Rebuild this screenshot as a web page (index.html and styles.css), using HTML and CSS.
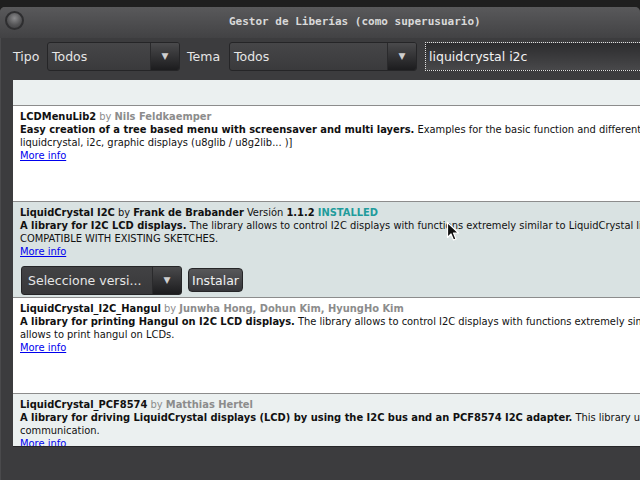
FILE: index.html
```html
<!DOCTYPE html>
<html lang="es">
<head>
<meta charset="utf-8">
<title>Gestor de Liberías</title>
<link rel="stylesheet" href="styles.css">
</head>
<body>
<div class="top-strip"></div>
<div class="window">
  <div class="titlebar">
    <span class="wm-button"></span>
    <span class="title">Gestor de Liberías (como superusuario)</span>
  </div>
  <div class="toolbar">
    <span class="label label-tipo">Tipo</span>
    <div class="combo combo-tipo">
      <span class="combo-text">Todos</span>
      <span class="combo-arrow">▼</span>
    </div>
    <span class="label label-tema">Tema</span>
    <div class="combo combo-tema">
      <span class="combo-text">Todos</span>
      <span class="combo-arrow">▼</span>
    </div>
    <div class="search">liquidcrystal i2c</div>
  </div>
  <div class="list">
    <div class="partial"></div>
    <div class="item">
      <div class="line"><b>LCDMenuLib2</b> <span class="muted">by</span> <b class="muted">Nils Feldkaemper</b></div>
      <div class="line"><b>Easy creation of a tree based menu with screensaver and multi layers.</b> Examples for the basic function and different</div>
      <div class="line">liquidcrystal, i2c, graphic displays (u8glib / u8g2lib... )]</div>
      <div class="line"><a class="more" href="#">More info</a></div>
    </div>
    <div class="item selected">
      <div class="line"><b>LiquidCrystal I2C</b> by <b>Frank de Brabander</b> Versión <b>1.1.2</b> <b class="installed">INSTALLED</b></div>
      <div class="line"><b>A library for I2C LCD displays.</b> The library allows to control I2C displays with functions extremely similar to LiquidCrystal library.</div>
      <div class="line">COMPATIBLE WITH EXISTING SKETCHES.</div>
      <div class="line"><a class="more" href="#">More info</a></div>
      <div class="actions">
        <div class="combo combo-version">
          <span class="combo-text">Seleccione versi...</span>
          <span class="combo-arrow">▼</span>
        </div>
        <button class="install">Instalar</button>
      </div>
    </div>
    <div class="item">
      <div class="line"><b>LiquidCrystal_I2C_Hangul</b> <span class="muted">by</span> <b class="muted">Junwha Hong, Dohun Kim, HyungHo Kim</b></div>
      <div class="line"><b>A library for printing Hangul on I2C LCD displays.</b> The library allows to control I2C displays with functions extremely similar</div>
      <div class="line">allows to print hangul on LCDs.</div>
      <div class="line"><a class="more" href="#">More info</a></div>
    </div>
    <div class="item light">
      <div class="line"><b>LiquidCrystal_PCF8574</b> <span class="muted">by</span> <b class="muted">Matthias Hertel</b></div>
      <div class="line"><b>A library for driving LiquidCrystal displays (LCD) by using the I2C bus and an PCF8574 I2C adapter.</b> This library uses</div>
      <div class="line">communication.</div>
      <div class="line"><a class="more" href="#">More info</a></div>
    </div>
  </div>
</div>
<svg class="cursor" width="14" height="21" viewBox="0 0 14 21">
  <path d="M1.5 1.5 L1.5 16.5 L5 13 L7.5 19 L10 18 L7.5 12 L12.5 12 Z" fill="#111" stroke="#fff" stroke-width="1.2" stroke-linejoin="round"/>
</svg>
</body>
</html>
```

FILE: styles.css
```css
html, body {
  margin: 0;
  padding: 0;
}
body {
  width: 640px;
  height: 480px;
  overflow: hidden;
  background: #1f1f1f;
  position: relative;
  font-family: "DejaVu Sans", sans-serif;
}
.top-strip {
  height: 7px;
}
.window {
  height: 473px;
  background: #3c3c3e;
  border-radius: 5px 5px 0 0;
  display: flex;
  flex-direction: column;
  box-shadow: inset 1px 0 0 #4a4a4c;
}
.titlebar {
  height: 31px;
  flex: none;
  display: flex;
  align-items: center;
  padding-left: 5px;
  background: linear-gradient(#59595b, #424244);
  border-radius: 5px 5px 0 0;
}
.wm-button {
  width: 19px;
  height: 19px;
  box-sizing: border-box;
  border-radius: 50%;
  border: 2px solid #2e2e30;
  background: radial-gradient(circle at 50% 35%, #8a8a8c, #555557 55%, #3a3a3c);
  margin-top: -4px;
}
.title {
  margin-left: 205px;
  margin-top: -3px;
  font-family: "DejaVu Sans Mono", monospace;
  font-weight: bold;
  font-size: 11px;
  color: #d9d9d9;
  white-space: nowrap;
}
.toolbar {
  height: 40px;
  flex: none;
  display: flex;
  align-items: flex-start;
  padding: 4px 0 0 13px;
  box-sizing: border-box;
  font-size: 12.5px;
  color: #e6e6e6;
  white-space: nowrap;
}
.label {
  height: 29px;
  line-height: 29px;
  flex: none;
}
.label-tipo {
  width: 34px;
}
.label-tema {
  width: 42px;
  margin-left: 7px;
}
.combo {
  height: 29px;
  box-sizing: border-box;
  display: flex;
  flex: none;
  border: 1px solid #252527;
  border-radius: 3px;
  background: linear-gradient(#464648, #3a3a3c);
  overflow: hidden;
  color: #e6e6e6;
}
.combo-text {
  flex: 1;
  line-height: 27px;
  padding-left: 4px;
  overflow: hidden;
}
.combo-arrow {
  width: 28px;
  flex: none;
  text-align: center;
  line-height: 27px;
  font-size: 9px;
  color: #cfcfcf;
  background: linear-gradient(#4a4a4c, #1c1c1e);
  border-left: 1px solid #2a2a2c;
}
.combo-tipo {
  width: 133px;
}
.combo-tema {
  width: 188px;
}
.search {
  margin-left: 8px;
  flex: 1;
  height: 29px;
  box-sizing: border-box;
  border: 1px dotted #e0e0e0;
  border-right: none;
  padding-left: 3px;
  line-height: 27px;
  color: #f2f2f2;
  background: linear-gradient(#2c2c2e, #48484a);
}
.list {
  margin: 2px 0 0 13px;
  height: 367px;
  box-sizing: border-box;
  border-bottom: 1px solid #262628;
  background: #ffffff;
  overflow: hidden;
  font-family: "DejaVu Sans Condensed", "DejaVu Sans", sans-serif;
  font-stretch: condensed;
  font-size: 11px;
  line-height: 13px;
  color: #111;
}
.partial {
  height: 26px;
  box-sizing: border-box;
  background: #ebf0f0;
  border-bottom: 1px solid #8c8c8c;
}
.item {
  height: 96px;
  box-sizing: border-box;
  padding: 4px 0 0 7px;
  border-bottom: 1px solid #8c8c8c;
  background: #ffffff;
}
.item.selected {
  background: #d9e2e2;
}
.item.light {
  background: #ebf0f0;
}
.line {
  white-space: nowrap;
}
.muted {
  color: #8c8c8c;
}
.installed {
  color: #1f9c9c;
}
.more {
  color: #0000ee;
  text-decoration: underline;
}
.actions {
  display: flex;
  align-items: flex-start;
  margin-top: 8px;
  font-family: "DejaVu Sans", sans-serif;
  font-stretch: normal;
  font-size: 12.5px;
}
.combo-version {
  width: 161px;
  margin-left: 1px;
  background: linear-gradient(#424244, #38383a);
}
.combo-version .combo-text {
  padding-left: 6px;
}
.install {
  margin: 2px 0 0 6px;
  width: 55px;
  height: 24px;
  padding: 0;
  border: 1px solid #262628;
  border-radius: 4px;
  background: linear-gradient(#58585a, #36363a);
  color: #f0f0f0;
  font-family: "DejaVu Sans", sans-serif;
  font-size: 12.5px;
}
.cursor {
  position: absolute;
  left: 446px;
  top: 221px;
}
```
